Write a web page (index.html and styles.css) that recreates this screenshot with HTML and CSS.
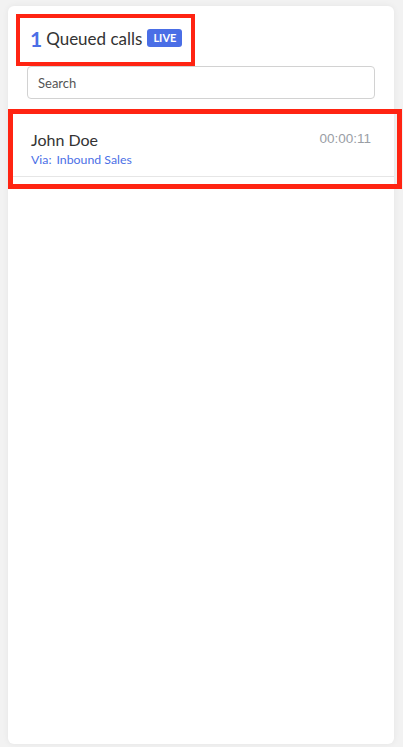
FILE: index.html
```html
<!DOCTYPE html>
<html>
<head>
<meta charset="utf-8">
<link rel="stylesheet" href="styles.css">
</head>
<body>
<div class="card">
  <div class="header">
    <div class="title-box">
      <span class="count">1</span>
      <span class="title">Queued calls</span>
      <span class="live">LIVE</span>
    </div>
  </div>
  <div class="search-wrap">
    <div class="search">Search</div>
  </div>
  <div class="row-box">
    <div class="row">
      <div class="row-main">
        <div class="name">John Doe</div>
        <div class="via">Via:<span class="via-name">Inbound Sales</span></div>
      </div>
      <div class="time">00:00:11</div>
    </div>
  </div>
</div>
</body>
</html>
```

FILE: styles.css
```css
html, body {
  margin: 0;
  padding: 0;
  height: 100%;
}
body {
  background: #f2f2f2;
  font-family: Lato, "Open Sans", sans-serif;
  padding: 6px 9px 3px 8px;
  box-sizing: border-box;
  height: 747px;
  overflow: hidden;
}
.card {
  background: #fff;
  border-radius: 6px;
  box-shadow: 0 0 6px rgba(0,0,0,0.06);
  height: 738px;
  box-sizing: border-box;
  position: relative;
}
.header {
  padding: 8px 0 0 8px;
  height: 52px;
}
.title-box {
  box-sizing: border-box;
  width: 179px;
  height: 52px;
  border: 4px solid #ff2412;
  display: flex;
  align-items: center;
  padding: 0 0 4px 10px;
}
.count {
  color: #4b6fe6;
  font-weight: 700;
  font-size: 21px;
  margin-right: 4px;
}
.title {
  color: #333;
  font-size: 17px;
  margin-right: 5px;
}
.live {
  background: #4a6ee6;
  color: #fff;
  font-size: 11px;
  font-weight: 700;
  border-radius: 3px;
  padding: 3px 6px;
  line-height: 12px;
}
.search-wrap {
  padding: 0 19px 0 19px;
}
.search {
  box-sizing: border-box;
  height: 33px;
  border: 1px solid #d2d2d2;
  border-radius: 4px;
  font-size: 13px;
  color: #555;
  display: flex;
  align-items: center;
  padding-left: 10px;
}
.row-box {
  margin-top: 10px;
  margin-right: -8px;
  box-sizing: border-box;
  height: 80px;
  border: 5px solid #ff2412;
}
.row {
  display: flex;
  justify-content: space-between;
  padding: 16px 23px 0 18px;
  height: 63px;
  box-sizing: border-box;
  border-bottom: 1px solid #e6e6e6;
  margin-right: 3px;
}
.name {
  font-size: 16px;
  color: #333;
  line-height: 20px;
}
.via {
  font-size: 12.3px;
  color: #4b6fe6;
  line-height: 16px;
  margin-top: 2px;
}
.via-name {
  margin-left: 5px;
}
.time {
  font-family: "Liberation Sans", Arial, sans-serif;
  font-size: 13.5px;
  color: #9a9ea5;
  line-height: 16px;
  font-weight: 400;
  margin-top: 1px;
}
```
